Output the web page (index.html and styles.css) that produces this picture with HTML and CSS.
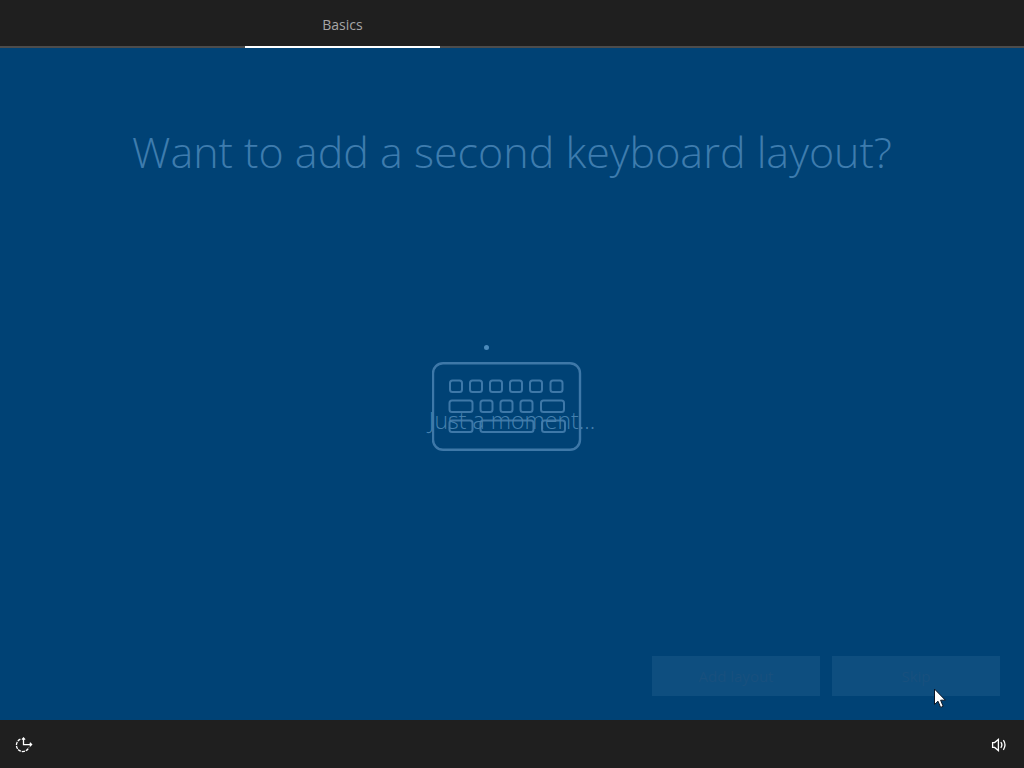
FILE: index.html
```html
<!DOCTYPE html>
<html lang="en">
<head>
  <meta charset="UTF-8">
  <meta name="viewport" content="width=device-width, initial-scale=1.0">
  <title>Setup - Basics</title>
  <link rel="stylesheet" href="styles.css">
</head>
<body>
  <nav class="steps">
    <a href="#basics" class="step active">Basics</a>
  </nav>

  <main id="basics" class="page">
    <h1>Want to add a second keyboard layout?</h1>

    <div class="art">
      <svg width="160" height="89" viewBox="0 0 160 89" fill="none" stroke="currentColor" stroke-width="2" aria-hidden="true">
        <rect x="1" y="1.2" width="147" height="86.6" rx="10" stroke-width="2.4"/>
        <!-- top row -->
        <rect x="18" y="18.5" width="12" height="11.5" rx="2.5"/>
        <rect x="38" y="18.5" width="12" height="11.5" rx="2.5"/>
        <rect x="58" y="18.5" width="12" height="11.5" rx="2.5"/>
        <rect x="78" y="18.5" width="12" height="11.5" rx="2.5"/>
        <rect x="98" y="18.5" width="12" height="11.5" rx="2.5"/>
        <rect x="118.5" y="18.5" width="12" height="11.5" rx="2.5"/>
        <!-- middle row -->
        <rect x="17.5" y="38.5" width="23" height="11.5" rx="2.5"/>
        <rect x="48.5" y="38.5" width="12" height="11.5" rx="2.5"/>
        <rect x="68.5" y="38.5" width="12" height="11.5" rx="2.5"/>
        <rect x="88.5" y="38.5" width="12" height="11.5" rx="2.5"/>
        <rect x="109" y="38.5" width="23" height="11.5" rx="2.5"/>
        <!-- space bar row -->
        <rect x="17.5" y="58.5" width="23" height="11.5" rx="2.5"/>
        <rect x="48.5" y="58.5" width="53" height="11.5" rx="2.5"/>
        <rect x="110" y="58.5" width="23" height="11.5" rx="2.5"/>
      </svg>
      <div class="loader" role="status">
        <span class="dot"></span>
        <p>Just a moment...</p>
      </div>
    </div>

    <div class="actions">
      <button type="button">Add layout</button>
      <button type="button">Skip</button>
      <svg class="cursor" width="13" height="21" viewBox="0 0 13 21" aria-hidden="true">
        <path d="M1.5 1v15.5l3.5-3.3 2.6 6.2 2.6-1.1-2.6-6.1h4.8z" fill="#fff" stroke="#0b1626" stroke-width="1"/>
      </svg>
    </div>
  </main>

  <footer class="bar">
    <button type="button" aria-label="Ease of access">
      <svg width="18" height="18" viewBox="0 0 18 18" fill="none" stroke="currentColor" stroke-width="1.3">
        <path d="M5.4 3.2A6.4 6.4 0 1 0 13.8 11.4" stroke-dasharray="3.2 .9"/>
        <path d="M8.5 2v6.6h8M6.9 3.6l1.6-1.7 1.6 1.7M14.8 6.8l1.8 1.8-1.8 1.8"/>
      </svg>
    </button>
    <button type="button" aria-label="Volume">
      <svg width="18" height="18" viewBox="0 0 18 18" fill="none" stroke="currentColor" stroke-width="1.3">
        <path d="M1.6 6.6h2L7.4 3.4v11.2L3.6 11.4h-2z"/>
        <path d="M9.8 6.2q2.2 2.8 0 5.6M12.4 4.2q3.2 4.8 0 9.6"/>
      </svg>
    </button>
  </footer>
</body>
</html>
```

FILE: styles.css
```css
* {
  box-sizing: border-box;
}
body {
  margin: 0;
  min-height: 100vh;
  display: flex;
  flex-direction: column;
  background: #004275;
  color: #fff;
  font-family: "Open Sans", sans-serif;
}
.steps {
  display: grid;
  grid-template-columns: 245fr 195fr 584fr;
  height: 48px;
  background: #1f1f1f;
  box-shadow: inset 0 -2px #4c4c4c;
}
.step {
  grid-column: 2;
  height: 48px;
  padding-top: 2px;
  font-size: 14px;
  line-height: 46px;
  text-align: center;
  color: #a6a6a6;
  text-decoration: none;
}
.step.active {
  border-bottom: 2px solid #fff;
}
.page {
  flex: 1;
  display: flex;
  flex-direction: column;
  padding: 72px 24px 24px;
}
h1 {
  margin: 0;
  font-size: 43px;
  font-weight: 300;
  line-height: 64px;
  text-align: center;
  color: #3e7cae;
}
.art {
  position: relative;
  flex: 1;
  display: flex;
  justify-content: center;
  padding-top: 178px;
  color: #3e78a8;
}

.loader {
  position: absolute;
  top: 160px;
  left: 0;
  right: 0;
  text-align: center;
  color: #4580ae;
}
.loader p {
  margin: 0;
  padding-top: 60px;
  font-size: 23px;
  font-weight: 300;
  line-height: 32px;
}
.dot {
  position: absolute;
  top: 1px;
  left: 50%;
  width: 5px;
  height: 5px;
  margin-left: -28px;
  border-radius: 50%;
  background: #4b8abb;
}
.actions {
  position: relative;
  display: flex;
  justify-content: flex-end;
  gap: 12px;
}
.actions button {
  width: 168px;
  height: 40px;
  border: 0;
  background: #0e4e7f;
  color: #18507e;
  font: 15px "Open Sans", sans-serif;
}
.cursor {
  position: absolute;
  top: 32px;
  right: 54px;
}
.bar {
  display: flex;
  justify-content: space-between;
  height: 48px;
  background: #1f1f1f;
}
.bar button {
  width: 48px;
  padding: 2px 0 0;
  border: 0;
  background: none;
  color: #fff;
}
.bar svg {
  display: block;
  margin: 0 auto;
}
```
